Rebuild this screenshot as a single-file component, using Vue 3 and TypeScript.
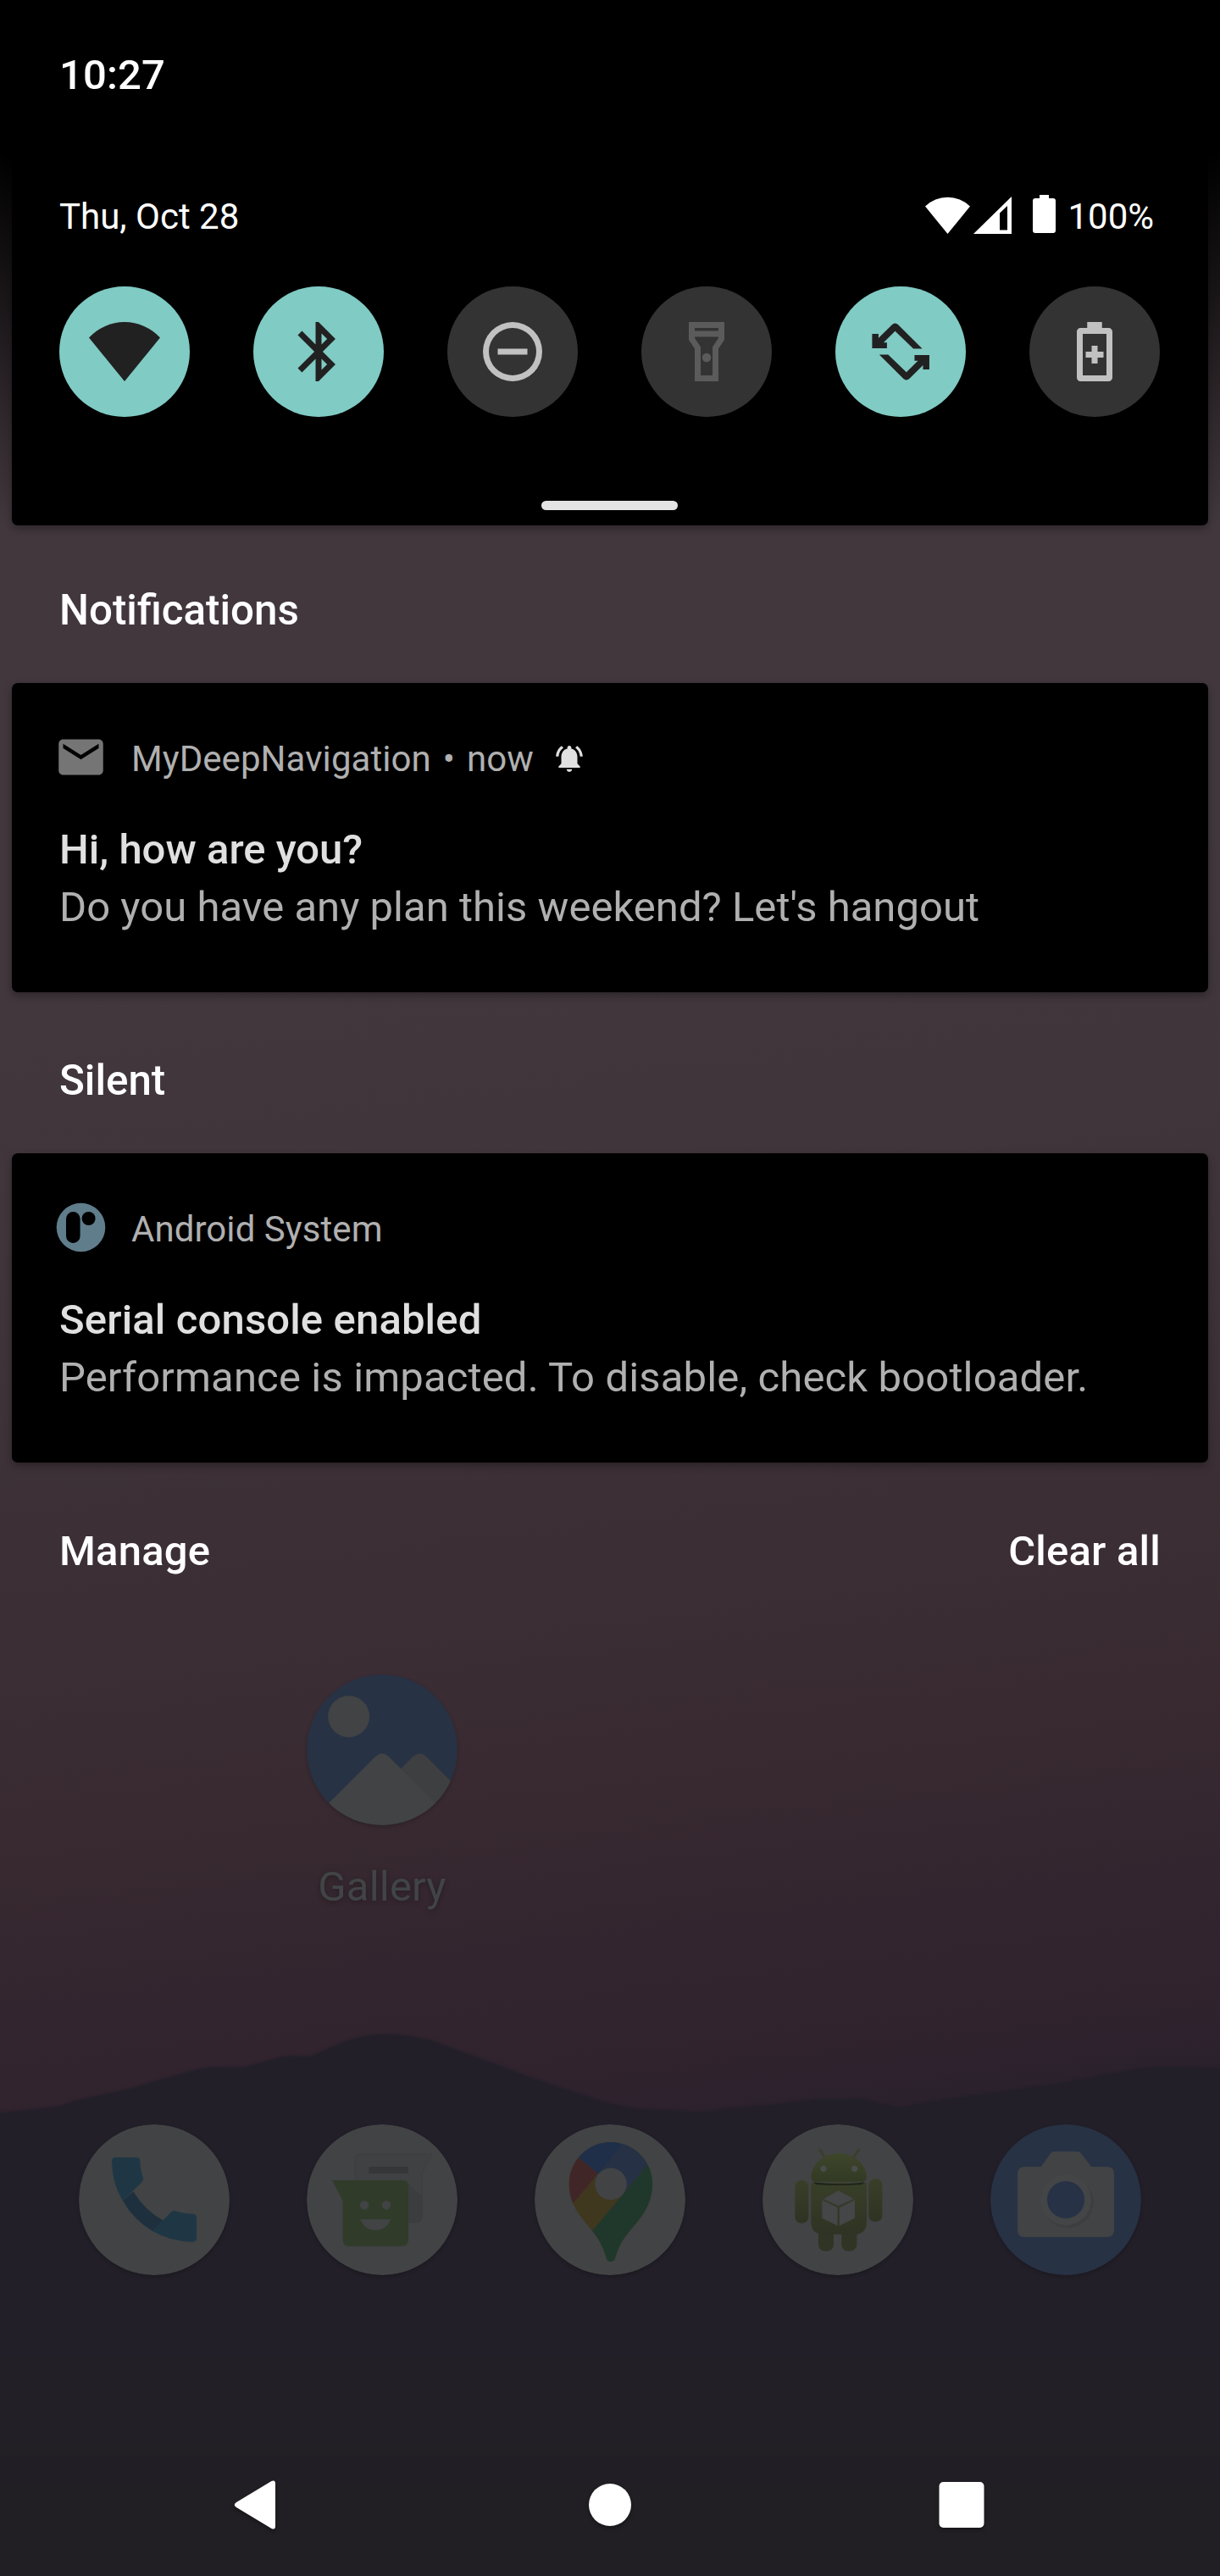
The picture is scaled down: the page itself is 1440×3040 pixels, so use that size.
<script setup lang="ts">
type TileState = 'on' | 'off' | 'disabled'

interface Tile {
  id: string
  state: TileState
  paths: string[]
}

interface Section {
  id: string
  heading: string
  app: string
  time?: string
  title: string
  body: string
}

const tiles: Tile[] = [
  {
    id: 'wifi',
    state: 'on',
    paths: ['M12 22L0 7.3A16.3 16.3 0 0 1 24 7.3Z'],
  },
  {
    id: 'bluetooth',
    state: 'on',
    paths: [
      'M17.71 7.71L12 2h-1v7.59L6.41 5 5 6.41 10.59 12 5 17.59 6.41 19 11 14.41V22h1l5.71-5.71-4.3-4.29 4.3-4.29zM13 5.83l1.88 1.88L13 9.59V5.83zm1.88 10.46L13 18.17v-3.76l1.88 1.88z',
    ],
  },
  {
    id: 'dnd',
    state: 'off',
    paths: ['M12 2a10 10 0 1 0 0 20a10 10 0 1 0 0-20zM12 4a8 8 0 1 1 0 16a8 8 0 1 1 0-16z', 'M7 11h10v2H7z'],
  },
  {
    id: 'flashlight',
    state: 'disabled',
    paths: [
      'M18 2H6v6l2 3v11h8V11l2-3V2zM16 4v1H8V4h8zM14 10.4V20h-4v-9.6L8 7.4V7h8v.4z',
      'M12 12.5a1.5 1.5 0 1 0 0 3a1.5 1.5 0 1 0 0-3z',
    ],
  },
  {
    id: 'rotate',
    state: 'on',
    paths: [
      'M2.4 6h2.15v1.45L9.1 2.9Q10.15 1.9 11.2 2.9L19.3 11H16.3L10.15 5.05L6.25 8.95H7.4v1.9H2.4z',
      'M21.7 18h-2.15v-1.45L15 21.1Q13.95 22.1 12.9 21.1L4.8 13H7.8L13.95 18.95L17.85 15.05H16.7v-1.9H21.7z',
    ],
  },
  {
    id: 'battery-saver',
    state: 'off',
    paths: [
      'M16.7 4H14.5V2h-5v2H7.3C6.6 4 6 4.6 6 5.3v15.4C6 21.4 6.6 22 7.3 22h9.4c.7 0 1.3-.6 1.3-1.3V5.3C18 4.6 17.4 4 16.7 4zM16 20H8V6h8z',
      'M11 10h2v2h2v2h-2v2h-2v-2H9v-2h2z',
    ],
  },
]

const sections: Section[] = [
  {
    id: 'alerting',
    heading: 'Notifications',
    app: 'MyDeepNavigation',
    time: 'now',
    title: 'Hi, how are you?',
    body: "Do you have any plan this weekend? Let's hangout",
  },
  {
    id: 'silent',
    heading: 'Silent',
    app: 'Android System',
    title: 'Serial console enabled',
    body: 'Performance is impacted. To disable, check bootloader.',
  },
]
</script>

<template>
  <div class="screen">
    <svg class="hills" viewBox="0 0 1440 660" aria-hidden="true">
      <defs>
        <linearGradient id="hillFill" x1="0" y1="0" x2="0" y2="1">
          <stop offset="0" stop-color="#221f29" />
          <stop offset="0.5" stop-color="#221f28" />
          <stop offset="0.8" stop-color="#211f24" />
          <stop offset="1" stop-color="#211f23" />
        </linearGradient>
        <filter id="hillSoft" x="-2%" y="-2%" width="104%" height="104%" color-interpolation-filters="sRGB">
          <feGaussianBlur stdDeviation="1.6" />
        </filter>
      </defs>
      <path
        filter="url(#hillSoft)"
        fill="url(#hillFill)"
        d="M-20 116L0 113L46 108L71 105L87 99L151 85L220 65Q240 59 253 59H289L321 50Q338 45 349 46H367L404 30Q432 19 459 20Q490 22 514 29L551 43L597 60L643 77L689 92L720 102L748 108L789 110L835 112L858 108L927 102L963 97H1018L1062 107L1101 99L1179 88L1257 77L1331 63Q1350 59 1372 59L1460 60V700H-20Z"
      />
    </svg>

    <header class="status-bar">10:27</header>

    <section class="quick-panel">
      <div class="quick-status">
        <span>Thu, Oct 28</span>
        <div class="indicators">
          <svg class="ind-wifi" viewBox="0 0 53 45"><path d="M26.5 45L0 12.5A38 38 0 0 1 53 12.5Z" /></svg>
          <svg class="ind-cell" viewBox="0 0 45 45">
            <path fill-rule="evenodd" d="M0 45L45 1V45ZM31 20.5V40.5H40V12Z" />
          </svg>
          <svg class="ind-battery" viewBox="0 0 27 45">
            <path d="M8 0h11v4h5q3 0 3 3v35q0 3-3 3H3q-3 0-3-3V7q0-3 3-3h5z" />
          </svg>
          <span>100%</span>
        </div>
      </div>
      <div class="tiles">
        <div v-for="tile in tiles" :key="tile.id" class="tile" :class="tile.state">
          <svg viewBox="0 0 24 24">
            <path v-for="d in tile.paths" :key="d" :d="d" fill-rule="evenodd" />
          </svg>
        </div>
      </div>
      <div class="handle"></div>
    </section>

    <main class="shade">
      <section v-for="s in sections" :key="s.id" :class="s.id">
        <h2 class="heading">{{ s.heading }}</h2>
        <article class="card">
          <div class="card-head">
            <svg v-if="s.id === 'alerting'" class="app-icon" viewBox="0 0 24 24">
              <path
                fill="#757575"
                d="M20 4H4c-1.1 0-1.99.9-1.99 2L2 18c0 1.1.9 2 2 2h16c1.1 0 2-.9 2-2V6c0-1.1-.9-2-2-2zm0 4l-8 5-8-5V6l8 5 8-5v2z"
              />
            </svg>
            <svg v-else class="app-icon" viewBox="0 0 63 63">
              <circle cx="31.5" cy="31.5" r="28.8" fill="#607d8b" />
              <rect x="14" y="13" width="16.6" height="37" rx="8.3" />
              <circle cx="40.6" cy="21" r="8" />
            </svg>
            <div class="app-line">
              <span>{{ s.app }}</span>
              <template v-if="s.time">
                <span>•</span>
                <span>{{ s.time }}</span>
                <svg class="bell" viewBox="0 0 24 24">
                  <path
                    fill="#e0e0e0"
                    d="M7.58 4.08L6.15 2.65C3.75 4.48 2.17 7.3 2.03 10.5h2c.15-2.65 1.51-4.97 3.55-6.42zm12.39 6.42h2c-.15-3.2-1.73-6.02-4.12-7.85l-1.42 1.43c2.02 1.45 3.39 3.77 3.54 6.42zM18 11c0-3.07-1.64-5.64-4.5-6.32V4c0-.83-.67-1.5-1.5-1.5s-1.5.67-1.5 1.5v.68C7.63 5.36 6 7.92 6 11v5l-2 2v1h16v-1l-2-2v-5zm-6 11c.14 0 .27-.01.4-.04.65-.14 1.18-.58 1.44-1.18.1-.24.15-.5.15-.78h-4c.01 1.1.9 2 2.01 2z"
                  />
                </svg>
              </template>
            </div>
          </div>
          <h3>{{ s.title }}</h3>
          <p>{{ s.body }}</p>
        </article>
      </section>
      <div class="shade-actions">
        <span>Manage</span>
        <span>Clear all</span>
      </div>
    </main>

    <div class="home-row">
      <div class="home-app">
        <svg class="launcher-icon" viewBox="186 107 534 534">
          <defs>
            <clipPath id="galleryDisc"><circle cx="453" cy="374" r="267" /></clipPath>
          </defs>
          <g clip-path="url(#galleryDisc)">
            <rect x="186" y="107" width="534" height="534" fill="#273244" />
            <path d="M520 440L562 398Q586 376 610 398L696 484L740 640H560Z" fill="#3d3f40" />
            <path d="M265 562L430 397Q453 376 476 397L642 562L600 660H300Z" fill="#414344" />
          </g>
          <circle cx="335" cy="256" r="73.5" fill="#414344" />
        </svg>
        <span>Gallery</span>
      </div>
    </div>

    <div class="dock">
      <!-- Phone -->
      <svg class="launcher-icon" viewBox="39 51 534 534">
        <circle cx="306" cy="318" r="267" fill="#414344" />
        <path d="M195 322L232 289Q274 358 339 392L300 429Q232 388 195 322Z" fill="#1e303e" />
        <path d="M170 168H243Q256 168 256 182Q257 215 267 240Q268 249 262 256L195 322Q156 258 156 182Q156 168 170 168Z" fill="#1f3745" />
        <path d="M300 429L367 361Q374 355 383 358Q410 368 443 368Q456 369 456 382V454Q456 467 443 467Q364 466 300 429Z" fill="#1f3745" />
      </svg>
      <!-- Messages -->
      <svg class="launcher-icon" viewBox="846 51 534 534">
        <circle cx="1113" cy="318" r="267" fill="#414344" />
        <path d="M1040 155H1290L1255 224V375Q1255 398 1232 398H1040Q1018 398 1018 375V177Q1018 155 1040 155Z" fill="#3f4142" stroke="#3c3e3f" stroke-width="2" />
        <path d="M1206 262L1255 306V375Q1255 398 1232 398H1206Z" fill="#3b3d3e" />
        <rect x="1066" y="201" width="140" height="24" fill="#363738" />
        <path d="M936 249H1184Q1206 249 1206 271V460Q1206 482 1184 482H996Q974 482 974 460V322Z" fill="#303b2a" />
        <circle cx="1050" cy="337" r="16" fill="#414344" />
        <circle cx="1128" cy="337" r="16" fill="#414344" />
        <path d="M1035 387H1144Q1128 426 1090 426Q1052 426 1035 387Z" fill="#414344" />
      </svg>
      <!-- Maps -->
      <svg class="launcher-icon" viewBox="33 51 534 534">
        <defs>
          <clipPath id="mapPin">
            <path d="M303 114A148 148 0 0 1 450 262C450 330 415 375 385 410C350 450 330 480 318 525Q314 537 303 537Q290 537 287 525C278 488 262 458 237 428C205 388 155 340 155 262A148 148 0 0 1 303 114Z" />
          </clipPath>
        </defs>
        <circle cx="300" cy="318" r="267" fill="#414344" />
        <g clip-path="url(#mapPin)">
          <rect x="150" y="110" width="310" height="440" fill="#40371f" />
          <path d="M140 125L189 169L258 225L169 330L140 364Z" fill="#412628" />
          <path d="M189 169L130 110H356L346 122L258 225Z" fill="#1f2f49" />
          <path d="M346 122L356 110H470V150L433 195L340 305L258 225Z" fill="#263146" />
          <path d="M237 428L433 195H470V560H180Z" fill="#20382b" />
        </g>
        <circle cx="303" cy="262" r="56.5" fill="#414344" />
      </svg>
      <!-- Android app -->
      <svg class="launcher-icon" viewBox="840 51 534 534">
        <defs>
          <linearGradient id="droidHead" x1="0" y1="0" x2="0" y2="1">
            <stop offset="0" stop-color="#3d452a" />
            <stop offset="1" stop-color="#333a24" />
          </linearGradient>
          <linearGradient id="droidBody" x1="0" y1="0" x2="0" y2="1">
            <stop offset="0" stop-color="#383f28" />
            <stop offset="1" stop-color="#2e3323" />
          </linearGradient>
        </defs>
        <circle cx="1107" cy="318" r="267" fill="#414344" />
        <path d="M1043 141L1060 167M1181 141L1163 167" stroke="#383f2a" stroke-width="8" stroke-linecap="round" />
        <rect x="1038" y="400" width="54" height="100" rx="24" fill="#2f3425" />
        <rect x="1120" y="400" width="54" height="100" rx="24" fill="#2f3425" />
        <rect x="955" y="249" width="48" height="152" rx="22" fill="url(#droidBody)" />
        <rect x="1216" y="244" width="48" height="152" rx="22" fill="url(#droidBody)" />
        <path d="M1012 236C1018 188 1056 154 1110 154S1203 188 1209 236Q1209 254 1192 254H1029Q1012 254 1012 236Z" fill="url(#droidHead)" />
        <path d="M1012 262Q1012 257 1018 257H1203Q1209 257 1209 262V396Q1209 440 1165 440H1056Q1012 440 1012 396Z" fill="url(#droidBody)" />
        <path d="M1020 256Q1110 268 1201 256L1192 264Q1110 270 1029 264Z" fill="#1f2319" />
        <circle cx="1056" cy="208" r="11" fill="#4a4c4c" />
        <circle cx="1166" cy="208" r="11" fill="#4a4c4c" />
        <path d="M1109 286L1163 315L1109 340L1055 315ZM1051 319L1106 346V410L1051 383ZM1167 319L1112 346V410L1167 383Z" fill="#444647" />
      </svg>
      <!-- Camera -->
      <svg class="launcher-icon" viewBox="0 0 534 534">
        <circle cx="267" cy="267" r="267" fill="#273244" />
        <path d="M121 150H179L213 103Q218 96 226 96H308Q316 96 321 103L358 150H413Q438 150 438 175V374Q438 399 413 399H121Q96 399 96 374V175Q96 150 121 150Z" fill="#414344" />
        <circle cx="274" cy="276" r="91" fill="#3a3c3d" opacity="0.6" />
        <circle cx="267" cy="267" r="90" fill="#434546" />
        <circle cx="267" cy="267" r="66" fill="#273246" />
      </svg>
    </div>

    <nav class="nav-bar">
      <svg viewBox="0 0 58 58"><path d="M44.5 1Q49 -1 49 4V54Q49 59 44.5 57L3 32Q-1.500 29 3 26Z" /></svg>
      <svg viewBox="0 0 58 58"><circle cx="29" cy="29" r="25" /></svg>
      <svg viewBox="0 0 58 58"><rect x="2.500" y="2" width="53" height="54" rx="5" /></svg>
    </nav>
  </div>
</template>

<style>
html,
body {
  margin: 0;
  background: #211f23;
}
</style>

<style scoped>
.screen {
  position: relative;
  display: flex;
  flex-direction: column;
  width: 1440px;
  height: 3040px;
  overflow: hidden;
  font-family: Roboto, "Liberation Sans", sans-serif;
  font-size: 49px;
  line-height: 57px;
  color: #fff;
  background:
    linear-gradient(180deg, #000 175px, rgba(0, 0, 0, 0) 620px),
    linear-gradient(173deg, #41373d 0, #41373d 1150px, #3f353b 1450px, #3b2f35 1900px, #392a31 2150px, #34262f 2330px, #30232e 2500px, #2b212c 2590px);
}

.hills {
  position: absolute;
  left: 0;
  bottom: 0;
  width: 1440px;
  height: 660px;
}

.status-bar {
  box-sizing: border-box;
  height: 140px;
  padding: 60px 70px 0;
  background: #000;
  font-weight: 500;
  letter-spacing: 0.15px;
}

.quick-panel {
  box-sizing: border-box;
  height: 480px;
  margin: 0 14px;
  padding: 91px 56px 0;
  border-radius: 0 0 7px 7px;
  background: #000;
  box-shadow: 0 4px 10px rgba(0, 0, 0, 0.3);
}

.quick-status {
  display: flex;
  justify-content: space-between;
  font-size: 42px;
  line-height: 49px;
}

.indicators {
  display: flex;
  align-items: flex-start;
  padding-right: 8px;
}

.indicators svg {
  height: 45px;
  fill: #fff;
}

.ind-wifi {
  width: 53px;
  margin-right: 4px;
}

.ind-cell {
  width: 45px;
  margin-right: 25px;
}

.ind-battery {
  width: 27px;
  margin: -1px 14px 0 0;
}

.tiles {
  display: flex;
  gap: 75px;
  margin-top: 58px;
}

.tile {
  display: flex;
  align-items: center;
  justify-content: center;
  width: 154px;
  height: 154px;
  border-radius: 50%;
  background: #333;
}

.tile svg {
  width: 84px;
  height: 84px;
  fill: #c1c1c1;
}

.tile.on {
  background: #80cbc4;
}

.tile.on svg {
  fill: #212121;
}

.tile.disabled svg {
  fill: #5b5b5b;
}

.handle {
  width: 161px;
  height: 11px;
  margin: 99px 0 0 569px;
  border-radius: 5.5px;
  background: #e4e4e4;
}

.shade {
  position: relative;
}

.heading {
  box-sizing: border-box;
  height: 186px;
  margin: 0;
  padding: 72px 70px 0;
  font-size: 49.3px;
  font-weight: 500;
}

.silent .heading {
  height: 190px;
  padding-top: 76px;
}

.card {
  box-sizing: border-box;
  height: 365px;
  margin: 0 14px;
  padding: 56px 56px 0;
  border-radius: 7px;
  background: #000;
  box-shadow: 0 4px 10px rgba(0, 0, 0, 0.3);
}

.card-head {
  display: flex;
  height: 63px;
  margin-left: -6px;
}

.app-icon {
  width: 63px;
  height: 63px;
}

.app-line {
  display: flex;
  gap: 14px;
  padding: 9px 0 0 28px;
  font-size: 42px;
  line-height: 49px;
  letter-spacing: 0.06px;
  color: #b0b0b0;
}

.bell {
  width: 38px;
  height: 38px;
  margin: 5px 0 0 9px;
}

.card h3 {
  margin: 49px 0 11px;
  font-size: 49px;
  font-weight: 500;
  color: #e0e0e0;
}

.card p {
  margin: 0;
  letter-spacing: 0.03px;
  color: #b0b0b0;
  white-space: nowrap;
}

.silent .card h3,
.silent .card p {
  letter-spacing: 0.145px;
}

.shade-actions {
  display: flex;
  justify-content: space-between;
  padding: 76px 70px 0;
  font-weight: 500;
  letter-spacing: 0.2px;
}

.home-row,
.dock {
  position: relative;
  display: grid;
  grid-template-columns: repeat(5, 269px);
  justify-content: center;
  justify-items: center;
}

.home-row {
  height: 531px;
  margin-top: 117px;
}

.home-app {
  grid-column: 2;
  display: flex;
  flex-direction: column;
  align-items: center;
  gap: 44px;
  color: #414446;
  letter-spacing: 0.2px;
  text-shadow: 0 2px 6px rgba(0, 0, 0, 0.3);
}

.launcher-icon {
  display: block;
  width: 178px;
  height: 178px;
  border-radius: 50%;
  box-shadow: 0 2px 4px rgba(0, 0, 0, 0.2);
}

.nav-bar {
  position: relative;
  display: flex;
  justify-content: space-between;
  width: 888px;
  margin: 242px auto 0;
}

.nav-bar svg {
  width: 58px;
  height: 58px;
  fill: #fff;
  filter: drop-shadow(0 3px 2px rgba(0, 0, 0, 0.3));
}
</style>
